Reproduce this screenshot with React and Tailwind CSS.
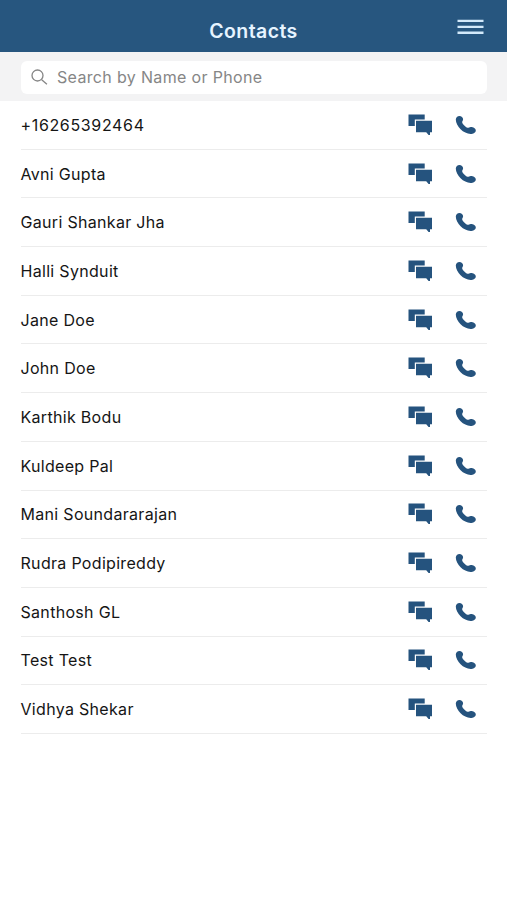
import React, { useState } from 'react';

const contacts = [
  '+16265392464',
  'Avni Gupta',
  'Gauri Shankar Jha',
  'Halli Synduit',
  'Jane Doe',
  'John Doe',
  'Karthik Bodu',
  'Kuldeep Pal',
  'Mani Soundararajan',
  'Rudra Podipireddy',
  'Santhosh GL',
  'Test Test',
  'Vidhya Shekar',
];

function ChatIcon() {
  return (
    <svg width="26" height="22" viewBox="0 0 26 22" fill="#25537e">
      <path d="M1.500 .5h16.200v5H7.800v6.600H1.500z" />
      <path d="M9 6.700h16v11.500h-2v2.800h-1.400l-2.400-2.800H9z" />
    </svg>
  );
}

function PhoneIcon() {
  return (
    <svg width="22" height="20" viewBox="0 0 22 20" fill="#25537e">
      <path d="M.8 4.600C.8 2.400 2.500.9 4.400.9c2 0 3.700 1.500 3.700 3.400 0 1.500-1.200 2-.9 3.200.4 1.700 3.500 4.800 5.300 5.300 1.100.3 1.700-.8 3.300-.8 2.500 0 5 1.500 5 3.400 0 2.100-2.600 3.600-5.200 3.600C8.700 19 .8 11.400.8 4.600z" />
    </svg>
  );
}

function ContactRow({ name }) {
  const isNumber = name.startsWith('+');

  return (
    <li className="flex h-[48.7px] items-center border-b border-[#ececec]">
      <span
        className={`flex-1 text-base text-[#151515] ${
          isNumber ? 'tracking-[0.65px]' : 'tracking-[0.31px]'
        }`}
      >
        {name}
      </span>
      <button className="mr-[22px]" aria-label="Message">
        <ChatIcon />
      </button>
      <button className="mr-[10px]" aria-label="Call">
        <PhoneIcon />
      </button>
    </li>
  );
}

export default function App() {
  const [searchTerm, setSearchTerm] = useState('');

  const filtered = contacts.filter((c) =>
    c.toLowerCase().includes(searchTerm.toLowerCase())
  );

  return (
    <div className="min-h-screen bg-white font-['Inter','Liberation_Sans',sans-serif]">
      {/* Header */}
      <header className="grid h-[52px] grid-cols-[1fr_auto_1fr] items-center bg-[#27567f] pt-2.5">
        <span />
        <h1 className="text-[19.5px] leading-6 font-semibold tracking-[0.4px] text-[#e6f4ff]">Contacts</h1>
        <button className="mr-[23px] mb-2 justify-self-end" aria-label="Menu">
          <svg width="27" height="16" viewBox="0 0 27 16" fill="#d3e9fa">
            <path d="M.5 .8h26v2.300H.5zM.5 6.800h26v2.300H.5zM.5 12.600h26v2.300H.5z" />
          </svg>
        </button>
      </header>

      {/* Search */}
      <div className="h-[49px] bg-[#f3f3f4] px-[20.5px] pt-[8.5px]">
        <label className="flex h-[33px] items-center rounded-md bg-white pl-2.5">
          <svg width="18" height="18" viewBox="0 0 18 18" fill="none" stroke="#858585" strokeWidth="1.3">
            <circle cx="6.500" cy="7.500" r="5.500" />
            <path d="M10.700 11.700l5.200 4.600" />
          </svg>
          <input
            className="ml-[8.5px] flex-1 bg-transparent text-base tracking-[0.34px] text-[#151515] outline-none placeholder:text-[#868686]"
            placeholder="Search by Name or Phone"
            value={searchTerm}
            onChange={(e) => setSearchTerm(e.target.value)}
          />
        </label>
      </div>

      {/* Contact list */}
      <ul className="px-[20.5px]">
        {filtered.map((name) => (
          <ContactRow key={name} name={name} />
        ))}
      </ul>
    </div>
  );
}
